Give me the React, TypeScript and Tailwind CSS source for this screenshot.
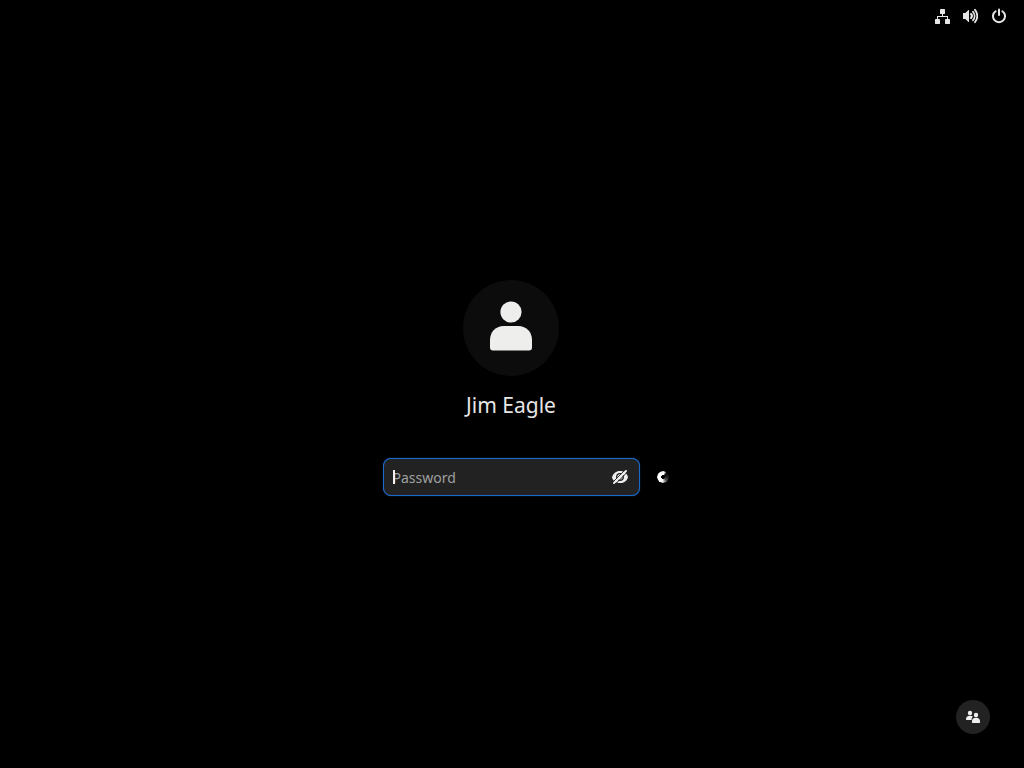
import { useState } from "react";

function NetworkIcon() {
  return (
    <svg viewBox="0 0 16 16" className="size-4" fill="currentColor" aria-hidden="true">
      <rect x="6" y="1" width="5" height="5" rx="0.4" />
      <rect x="1" y="11" width="5" height="5" rx="0.4" />
      <rect x="11" y="11" width="5" height="5" rx="0.4" />
      <path d="M8 6h1v2h5v3h-1V9H4v2H3V8h5z" />
    </svg>
  );
}

function VolumeIcon() {
  return (
    <svg viewBox="0 0 16 16" className="size-4" aria-hidden="true">
      <path d="M1 5h2.3L6.5 2H7v12h-.5l-3.2-3H1z" fill="currentColor" />
      <g fill="none" stroke="currentColor" strokeLinecap="round">
        <path d="M9 6a2.900 2.900 0 0 1 0 4" strokeWidth="2" />
        <path d="M11 3.800a6.400 6.400 0 0 1 0 8.400" strokeWidth="1.800" />
        <path d="M13 1.800a9.500 9.500 0 0 1 0 12.400" strokeWidth="1.800" />
      </g>
    </svg>
  );
}

function PowerIcon() {
  return (
    <svg viewBox="0 0 16 16" className="size-4" fill="none" stroke="currentColor" strokeWidth="2" strokeLinecap="round" aria-hidden="true">
      <path d="M9 1.500V7" />
      <path d="M5.600 3.200a6 6 0 1 0 6.800 0" />
    </svg>
  );
}

function ConcealIcon() {
  return (
    <svg viewBox="0 0 16 16" className="size-4" fill="none" stroke="currentColor" aria-hidden="true">
      <path d="M0 8.500C1 4.500 4 2 8 2s7 2.500 8 6c-1 4-4 6-8 6s-7-2-8-5.500z" fill="currentColor" stroke="none" />
      <circle cx="8" cy="8" r="3.300" className="stroke-[#222222]" strokeWidth="1.300" />
      <path d="M1 13 12.500 1.500" className="stroke-[#222222]" strokeWidth="1" />
      <path d="M2 14 14 2" strokeWidth="2" strokeLinecap="round" />
      <path d="M3.500 15 15.500 3" className="stroke-[#222222]" strokeWidth="1" />
    </svg>
  );
}

function UsersIcon() {
  return (
    <svg viewBox="0 0 16 16" className="size-4" fill="currentColor" aria-hidden="true">
      <circle cx="5" cy="4" r="2.200" />
      <path d="M1 10.500C1 8.100 2.400 6.800 4.500 6.800h1c1 0 1.800.200 2.400.700C7 8.500 6.600 9.500 6.600 11H1.500a.5.5 0 0 1-.5-.5z" />
      <circle cx="11" cy="6" r="2.200" />
      <path d="M7 12.500C7 10.100 8.400 8.800 10.500 8.800h1c2.100 0 3.500 1.300 3.500 3.700v1a.5.5 0 0 1-.5.5h-7a.5.5 0 0 1-.5-.5z" />
    </svg>
  );
}

function Avatar() {
  return (
    <div className="flex size-24 items-center justify-center rounded-full bg-[#0c0c0c]">
      <svg viewBox="0 0 96 96" className="size-24" fill="#eeeeec" aria-hidden="true">
        <circle cx="48" cy="32" r="10.600" />
        <path d="M41 46h14c9 0 14 6.500 14 14v7.500a3 3 0 0 1-3 3H30a3 3 0 0 1-3-3V60c0-7.500 5-14 14-14z" />
      </svg>
    </div>
  );
}

export default function App() {
  const [password, setPassword] = useState("");
  const [visible, setVisible] = useState(false);

  return (
    <div className="grid min-h-screen grid-rows-[1fr_auto_1fr] bg-black font-['Noto_Sans','Open_Sans',sans-serif] text-[#e6e6e6]">
      <header className="flex h-8 items-center justify-end gap-3 pr-[18px]">
        <button type="button" aria-label="Network"><NetworkIcon /></button>
        <button type="button" aria-label="Volume"><VolumeIcon /></button>
        <button type="button" aria-label="Power"><PowerIcon /></button>
      </header>

      <main className="flex flex-col items-center pt-2 pr-0.5">
        <Avatar />
        <h1 className="mt-3 text-[21px] leading-[34px] text-[#e6e6e6]">Jim Eagle</h1>
        <form className="mt-9 grid grid-cols-[1fr_257px_1fr] items-center gap-[17px]" onSubmit={(e) => e.preventDefault()}>
          <div className="relative col-start-2 flex h-[38px] items-center rounded-lg border border-[#1b6acb] bg-[#222222] pr-[11px] pl-[9px] shadow-[0_0_1px_#1b6acb]">
            <input
              type={visible ? "text" : "password"}
              aria-label="Password"
              placeholder="Password"
              value={password}
              onChange={(e) => setPassword(e.target.value)}
              className="min-w-0 flex-1 bg-transparent pt-0.5 text-sm text-[#eeeeee] outline-none placeholder:text-[#a0a0a0]"
            />
            {password === "" && <span className="pointer-events-none absolute left-[9px] h-3.5 w-0.5 bg-[#f2f2f2]" />}
            <button type="button" aria-label="Show password" className="text-[#eeeeee]" onClick={() => setVisible(!visible)}>
              <ConcealIcon />
            </button>
          </div>
          <span
            role="status"
            aria-label="Signing in"
            className="size-3 rounded-full bg-[conic-gradient(#ffffff_0deg,#ffffff_15deg,#0a0a0a_40deg,#1c1c1c_90deg,#555555_140deg,#ffffff_190deg,#ffffff_360deg)] [mask-image:radial-gradient(circle,transparent_2px,black_2px)]"
          />
        </form>
      </main>

      <footer className="flex items-end justify-end pr-[34px] pb-[34px]">
        <button type="button" aria-label="Switch user" className="flex size-[34px] items-center justify-center rounded-full bg-[#222222] text-[#eeeeee]">
          <UsersIcon />
        </button>
      </footer>
    </div>
  );
}
